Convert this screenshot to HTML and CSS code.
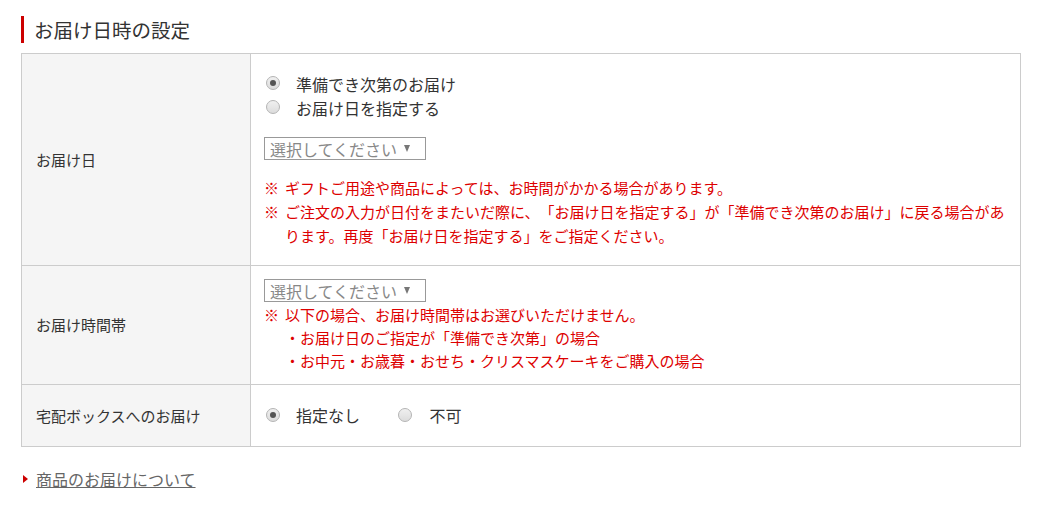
FILE: index.html
```html
<!DOCTYPE html>
<html lang="ja">
<head>
    <meta charset="UTF-8">
    <title>お届け日時の設定</title>
    <link rel="stylesheet" href="styles.css">
</head>
<body>
    <div class="section">
        <h2 class="section-title">お届け日時の設定</h2>
        <table class="delivery-table">
            <tr class="row-date">
                <th>お届け日</th>
                <td>
                    <label class="radio-line"><input type="radio" name="date" checked><span>準備でき次第のお届け</span></label>
                    <label class="radio-line"><input type="radio" name="date"><span>お届け日を指定する</span></label>
                    <div class="fake-select">選択してください<span class="arrow"></span></div>
                    <ul class="notes">
                        <li>ギフトご用途や商品によっては、お時間がかかる場合があります。</li>
                        <li>ご注文の入力が日付をまたいだ際に、「お届け日を指定する」が「準備でき次第のお届け」に戻る場合があります。再度「お届け日を指定する」をご指定ください。</li>
                    </ul>
                </td>
            </tr>
            <tr class="row-time">
                <th>お届け時間帯</th>
                <td>
                    <div class="fake-select">選択してください<span class="arrow"></span></div>
                    <ul class="notes">
                        <li>以下の場合、お届け時間帯はお選びいただけません。
                            <div class="sub">・お届け日のご指定が「準備でき次第」の場合</div>
                            <div class="sub">・お中元・お歳暮・おせち・クリスマスケーキをご購入の場合</div>
                        </li>
                    </ul>
                </td>
            </tr>
            <tr class="row-box">
                <th>宅配ボックスへのお届け</th>
                <td>
                    <label class="radio-inline"><input type="radio" name="box" checked><span>指定なし</span></label>
                    <label class="radio-inline"><input type="radio" name="box"><span>不可</span></label>
                </td>
            </tr>
        </table>
        <a class="more-link" href="#">商品のお届けについて</a>
    </div>
</body>
</html>
```

FILE: styles.css
```css
body {
    margin: 0;
    font-family: "Noto Sans CJK JP", "Noto Sans", sans-serif;
    color: #333333;
    background: #ffffff;
    text-spacing-trim: space-all;
}

.section {
    padding: 16px 20px 0 21px;
}

.section-title {
    margin: 0 0 10px;
    padding-left: 10px;
    border-left: 3px solid #cc0000;
    font-size: 19.5px;
    font-weight: normal;
    line-height: 27px;
}

.delivery-table {
    width: 1000px;
    border-collapse: collapse;
}

.delivery-table th,
.delivery-table td {
    border: 1px solid #cccccc;
}

.delivery-table th {
    width: 200px;
    padding: 0 14px;
    background-color: #f5f5f5;
    font-size: 15px;
    font-weight: normal;
    text-align: left;
}

.delivery-table td {
    padding: 18px 14px 17px 13px;
    vertical-align: top;
}

.row-time td {
    padding-top: 13px;
    padding-bottom: 12px;
}

.row-box td {
    padding-top: 18px;
    padding-bottom: 19px;
}

input[type="radio"] {
    -webkit-appearance: none;
    appearance: none;
    width: 14px;
    height: 14px;
    margin: 0 16px 0 2px;
    border: 1px solid #b5b5b5;
    border-radius: 50%;
    background: linear-gradient(#f0f0f0, #dcdcdc);
    position: relative;
    flex-shrink: 0;
}

input[type="radio"]:checked::after {
    content: "";
    position: absolute;
    left: 3px;
    top: 3px;
    width: 6px;
    height: 6px;
    border-radius: 50%;
    background: #555555;
}

.radio-line,
.radio-inline {
    display: flex;
    align-items: center;
    height: 24px;
    font-size: 16px;
}

.radio-line input {
    margin-top: -3px;
}

.radio-inline {
    display: inline-flex;
    margin-right: 32px;
}

.radio-inline + .radio-inline input {
    margin-right: 18px;
}

.fake-select {
    display: inline-flex;
    align-items: center;
    box-sizing: border-box;
    width: 162px;
    height: 23px;
    margin-top: 17px;
    padding-left: 5px;
    border: 1px solid #999999;
    color: #888888;
    font-size: 16px;
    line-height: 20px;
}

.row-time .fake-select {
    margin-top: 0;
}

.arrow {
    margin-left: 7px;
    width: 0;
    height: 0;
    border-left: 3.5px solid transparent;
    border-right: 3.5px solid transparent;
    border-top: 7px solid #777777;
}

.notes {
    list-style: none;
    margin: 15px 0 0;
    padding: 0;
    color: #dd0000;
    font-size: 15px;
    line-height: 24px;
}

.row-time .notes {
    margin-top: 0;
    line-height: 23px;
}

.notes li {
    position: relative;
    padding-left: 21px;
}

.notes li::before {
    content: "※";
    position: absolute;
    left: 0;
}

.sub {
    padding-left: 0;
}

.more-link {
    display: inline-block;
    margin-top: 20px;
    padding-left: 15px;
    position: relative;
    color: #666666;
    font-size: 16px;
    line-height: 24px;
}

.more-link::before {
    content: "";
    position: absolute;
    left: 2px;
    top: 8px;
    border-top: 4px solid transparent;
    border-bottom: 4px solid transparent;
    border-left: 5px solid #cc0000;
}
```
